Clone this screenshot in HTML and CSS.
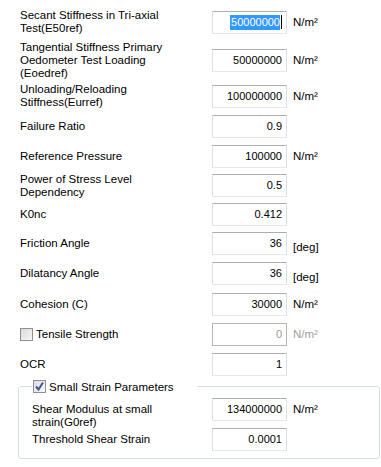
FILE: index.html
```html
<!DOCTYPE html>
<html>
<head>
    <title>Hardening Soil Parameters</title>
    <link rel="stylesheet" href="styles.css">
</head>
<body>
    <div class="form">
        <div class="row">
            <div class="label">Secant Stiffness in Tri-axial<br>Test(E50ref)</div>
            <div class="field"><span class="sel">50000000</span><span class="caret"></span></div>
            <div class="unit">N/m²</div>
        </div>
        <div class="row tall">
            <div class="label">Tangential Stiffness Primary<br>Oedometer Test Loading<br>(Eoedref)</div>
            <div class="field">50000000</div>
            <div class="unit">N/m²</div>
        </div>
        <div class="row">
            <div class="label">Unloading/Reloading<br>Stiffness(Eurref)</div>
            <div class="field">100000000</div>
            <div class="unit">N/m²</div>
        </div>
        <div class="row">
            <div class="label">Failure Ratio</div>
            <div class="field">0.9</div>
        </div>
        <div class="row">
            <div class="label">Reference Pressure</div>
            <div class="field">100000</div>
            <div class="unit">N/m²</div>
        </div>
        <div class="row short">
            <div class="label">Power of Stress Level<br>Dependency</div>
            <div class="field">0.5</div>
        </div>
        <div class="row short">
            <div class="label">K0nc</div>
            <div class="field">0.412</div>
        </div>
        <div class="row short">
            <div class="label">Friction Angle</div>
            <div class="field">36</div>
            <div class="unit deg">[deg]</div>
        </div>
        <div class="row wide">
            <div class="label">Dilatancy Angle</div>
            <div class="field">36</div>
            <div class="unit deg">[deg]</div>
        </div>
        <div class="row">
            <div class="label">Cohesion (C)</div>
            <div class="field">30000</div>
            <div class="unit">N/m²</div>
        </div>
        <div class="row">
            <div class="label check-label"><span class="check"></span>Tensile Strength</div>
            <div class="field disabled">0</div>
            <div class="unit disabled-text">N/m²</div>
        </div>
        <div class="row wide">
            <div class="label">OCR</div>
            <div class="field">1</div>
        </div>

        <fieldset class="group">
            <legend class="check-label">
                <span class="check checked">
                    <svg width="11" height="11" viewBox="0 0 11 11"><path d="M2 5.5 L4.5 8.5 L9 1.5" fill="none" stroke="#3b55a0" stroke-width="2"/></svg>
                </span>Small Strain Parameters
            </legend>
            <div class="row">
                <div class="label low">Shear Modulus at small<br>strain(G0ref)</div>
                <div class="field">134000000</div>
                <div class="unit">N/m²</div>
            </div>
            <div class="row wide">
                <div class="label">Threshold Shear Strain</div>
                <div class="field">0.0001</div>
            </div>
        </fieldset>
    </div>
</body>
</html>
```

FILE: styles.css
```css
body { margin: 0; background: #fff; color: #000; font-family: "Liberation Sans", Arial, sans-serif; font-size: 11px; }
.form { padding-top: 7px; }
.row { display: flex; align-items: center; height: 30px; padding-left: 20px; }
.row.tall { height: 42px; margin-top: 2px; }
.row.short { height: 29px; }
.row.wide { height: 31px; }
.label { width: 192px; font-size: 11.5px; line-height: 13px; }
.label.low { align-self: flex-start; padding-top: 9px; }
.field { box-sizing: border-box; width: 75px; height: 23px; padding-right: 4px; line-height: 20px; text-align: right; border: 1px solid #dbdfe6; border-top-color: #abadb3; border-bottom-color: #e3e9ef; background: #fff; }
.field.disabled { border-color: #b4b6b9; color: #9a9a9a; }
.sel { background: #3399ff; color: #fff; padding: 1px 0 2px 1px; }
.caret { display: inline-block; width: 1px; height: 14px; margin-left: 1px; vertical-align: -3px; background: #000; }
.unit { margin-left: 6px; font-size: 11.5px; }
.unit.deg { padding-top: 6px; }
.disabled-text { color: #a0a0a0; }
.check-label { display: flex; align-items: center; }
.check { box-sizing: border-box; width: 13px; height: 13px; margin-right: 3px; border: 1px solid #8e8f8f; background: linear-gradient(135deg, #d9d9d9, #f8f8f8); display: flex; align-items: center; justify-content: center; }
.check.checked { background: linear-gradient(135deg, #dcdcdc, #fafafa); }
.group { margin: 0 1px 0 18px; padding: 1px 0 3px 13px; border: 1px solid #d5dfe5; border-radius: 3px; }
.group .row { padding-left: 0; }
.group .label { width: 180px; }
.group legend { box-sizing: border-box; width: 165px; padding: 0 0 0 1px; height: 13px; font-size: 11.5px; }
```
